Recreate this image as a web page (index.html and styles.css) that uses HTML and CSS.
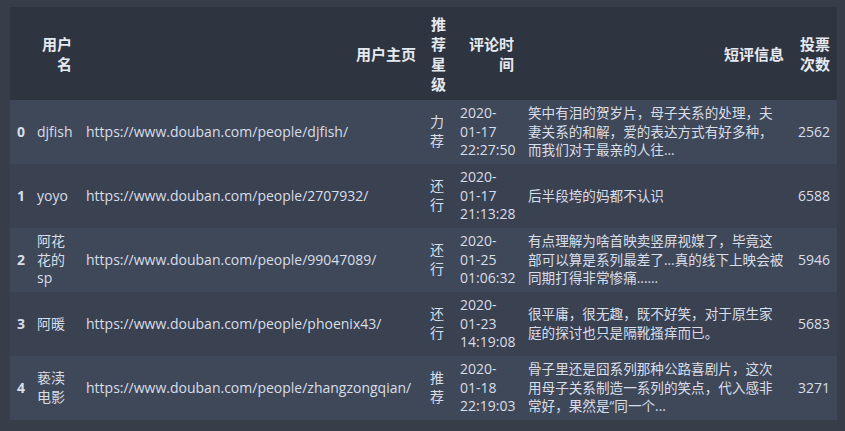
FILE: index.html
```html
<!DOCTYPE html>
<html lang="zh-CN">
<head>
<meta charset="utf-8">
<title>DataFrame</title>
<link rel="stylesheet" href="styles.css">
</head>
<body>
<table class="df">
  <colgroup>
    <col class="c-idx">
    <col class="c-user">
    <col class="c-url">
    <col class="c-star">
    <col class="c-time">
    <col class="c-text">
    <col class="c-votes">
  </colgroup>
  <thead>
    <tr>
      <th></th>
      <th>用户名</th>
      <th>用户主页</th>
      <th>推荐星级</th>
      <th>评论时间</th>
      <th>短评信息</th>
      <th>投票次数</th>
    </tr>
  </thead>
  <tbody>
    <tr>
      <th>0</th>
      <td>djfish</td>
      <td>https://www.douban.com/people/djfish/</td>
      <td>力荐</td>
      <td>2020-<wbr>01-17 22:27:50</td>
      <td class="txt">笑中有泪的贺岁片，母子关系的处理，夫妻关系的和解，爱的表达方式有好多种，而我们对于最亲的人往...</td>
      <td>2562</td>
    </tr>
    <tr>
      <th>1</th>
      <td>yoyo</td>
      <td>https://www.douban.com/people/2707932/</td>
      <td>还行</td>
      <td>2020-<wbr>01-17 21:13:28</td>
      <td class="txt">后半段垮的妈都不认识</td>
      <td>6588</td>
    </tr>
    <tr>
      <th>2</th>
      <td>阿花花的sp</td>
      <td>https://www.douban.com/people/99047089/</td>
      <td>还行</td>
      <td>2020-<wbr>01-25 01:06:32</td>
      <td class="txt">有点理解为啥首映卖竖屏视媒了，毕竟这部可以算是系列最差了...真的线下上映会被同期打得非常惨痛......</td>
      <td>5946</td>
    </tr>
    <tr>
      <th>3</th>
      <td>阿暖</td>
      <td>https://www.douban.com/people/phoenix43/</td>
      <td>还行</td>
      <td>2020-<wbr>01-23 14:19:08</td>
      <td class="txt">很平庸，很无趣，既不好笑，对于原生家庭的探讨也只是隔靴搔痒而已。</td>
      <td>5683</td>
    </tr>
    <tr>
      <th>4</th>
      <td>亵渎电影</td>
      <td>https://www.douban.com/people/zhangzongqian/</td>
      <td>推荐</td>
      <td>2020-<wbr>01-18 22:19:03</td>
      <td class="txt">骨子里还是囧系列那种公路喜剧片，这次用母子关系制造一系列的笑点，代入感非常好，果然是“同一个...</td>
      <td>3271</td>
    </tr>
  </tbody>
</table>
</body>
</html>
```

FILE: styles.css
```css
html, body {
  margin: 0;
  padding: 0;
  background: #373e4a;
}

body {
  padding: 7px 0 0 10px;
  font-family: "Open Sans", "Noto Sans CJK SC", sans-serif;
  color: #d8dee9;
}

.df {
  border-collapse: collapse;
  border-spacing: 0;
  table-layout: fixed;
  width: 827px;
}

.c-idx { width: 20px; }
.c-user { width: 49px; }
.c-url { width: 344px; }
.c-star { width: 30px; }
.c-time { width: 68px; }
.c-text { width: 270px; }
.c-votes { width: 46px; }

.df th,
.df td {
  padding: 4px 7px;
  vertical-align: middle;
  text-align: left;
  font-size: 14px;
  line-height: 18.67px;
  word-break: normal;
}

.df thead th {
  background: #2e3440;
  font-weight: bold;
  font-size: 15px;
  line-height: 20px;
  padding: 6.5px 7px;
  text-align: right;
  color: #e5e9f0;
}

.df tbody th {
  font-weight: bold;
}

.df tbody tr:nth-child(odd) {
  background: #3f4858;
}

.df tbody tr:nth-child(even) {
  background: #3a4150;
}

.df td.txt {
  font-size: 13.6px;
}
```
